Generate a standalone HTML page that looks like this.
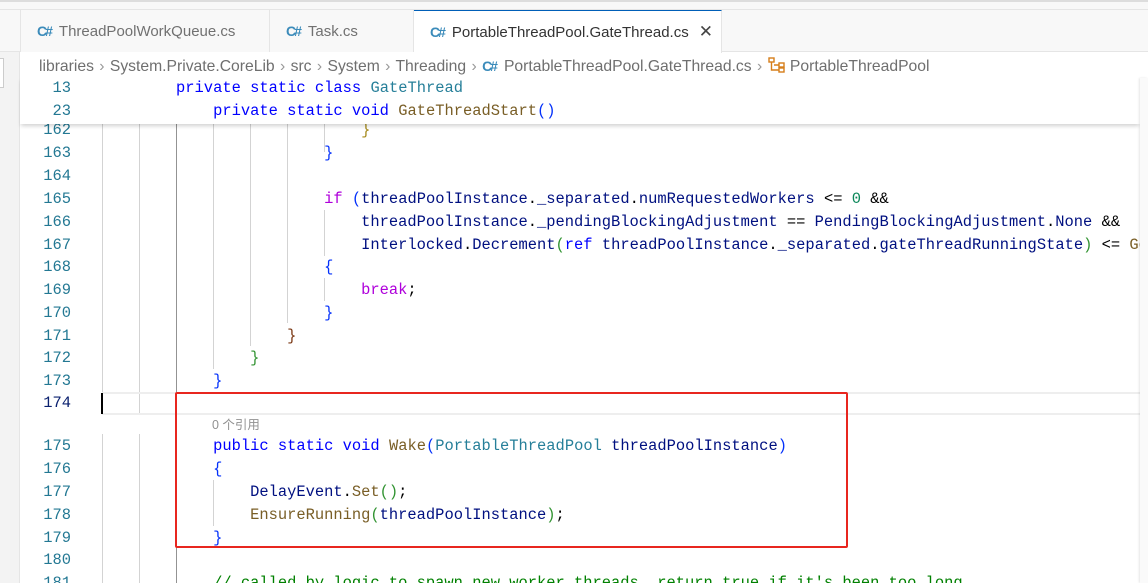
<!DOCTYPE html>
<html><head><meta charset="utf-8"><style>
*{margin:0;padding:0;box-sizing:border-box}
html,body{width:1148px;height:583px;overflow:hidden}
body{background:#fff;position:relative;font-family:"Liberation Sans","Noto Sans CJK SC",sans-serif}
#wrap{position:absolute;left:0;top:0;width:1148px;height:583px;overflow:hidden}
.abs{position:absolute}
.tab{position:absolute;top:10px;height:42px;font-size:15px;color:#717171;line-height:42px;border-right:1px solid #e5e5e5;background:#f8f8f8;white-space:nowrap}
.ci{color:#3b8bba;font-weight:bold;font-size:14px;margin-right:8px;letter-spacing:-2px}
.code{position:absolute;left:102px;font-family:"Liberation Mono",monospace;font-size:15.43px;white-space:pre;height:23px;line-height:23px;color:#000}
.ln{position:absolute;left:20px;width:51px;text-align:right;font-family:"Liberation Mono",monospace;font-size:15.43px;height:23px;line-height:23px;color:#237893}
.g{position:absolute;width:1px;background:#d3d3d3}
.k{color:#0000ff}.t{color:#267f99}.f{color:#795e26}.v{color:#001080}.p{color:#af00db}.n{color:#098658}.c{color:#008000}
.b1{color:#0431fa}.b2{color:#319331}.b3{color:#7b3814}.b4{color:#a58a1c}
.sep{color:#999;margin:0 1px}
</style></head><body><div id="wrap">
<div class="abs" style="left:0;top:0;width:1148px;height:10px;background:#f8f8f8;border-top:2px solid #ddd;border-bottom:1px solid #e5e5e5"></div>
<div class="abs" style="left:0;top:10px;width:1148px;height:42px;background:#f8f8f8;border-bottom:1px solid #e5e5e5"></div>
<div class="abs" style="left:0;top:52px;width:20px;height:531px;background:#f3f3f3;border-right:1px solid #e5e5e5"></div>
<div class="abs" style="left:0;top:58px;width:4px;height:30px;background:#fff;border:1px solid #ccc;border-left:none"></div>
<div class="tab" style="left:20px;width:250px;padding-left:16px;border-left:1px solid #e5e5e5"><span class="ci">C#</span>ThreadPoolWorkQueue.cs</div>
<div class="tab" style="left:270px;width:144px;padding-left:16px"><span class="ci">C#</span>Task.cs</div>
<div class="tab" style="left:414px;width:308px;padding-left:16px;background:#fff;color:#333;border-top:1px solid #005fb8;height:43px"><span class="ci">C#</span>PortableThreadPool.GateThread.cs<span style="margin-left:10px;color:#444;font-size:17px">✕</span></div>
<div class="abs" style="left:39px;top:55px;font-size:15.7px;color:#6f6f6f;line-height:22px;white-space:nowrap">libraries <span class="sep">›</span> System.Private.CoreLib <span class="sep">›</span> src <span class="sep">›</span> System <span class="sep">›</span> Threading <span class="sep">›</span> <span class="ci">C#</span>PortableThreadPool.GateThread.cs <span class="sep">›</span> <svg width="18" height="16" viewBox="0 0 18 16" style="vertical-align:-2px"><g fill="none" stroke="#d67e1a" stroke-width="1.4"><rect x="1" y="1" width="5" height="4"/><rect x="11" y="6" width="5" height="4"/><rect x="11" y="11" width="5" height="4"/><path d="M3.5 5v8h7M6 8h5"/></g></svg> PortableThreadPool</div>

<div class="g" style="left:102px;top:124px;height:268px"></div>
<div class="g" style="left:139px;top:124px;height:291px"></div>
<div class="g" style="left:176px;top:124px;height:459px;background:#939393"></div>
<div class="g" style="left:213px;top:124px;height:245px"></div>
<div class="g" style="left:250px;top:124px;height:222px"></div>
<div class="g" style="left:287px;top:124px;height:199px"></div>
<div class="g" style="left:324px;top:124px;height:28px"></div>
<div class="g" style="left:324px;top:210px;height:46px"></div>
<div class="g" style="left:324px;top:278px;height:23px"></div>
<div class="g" style="left:102px;top:434px;height:149px"></div>
<div class="g" style="left:139px;top:434px;height:149px"></div>
<div class="g" style="left:213px;top:480px;height:46px"></div>
<div class="abs" style="left:102px;top:392px;width:1038px;height:23px;border-top:2px solid #eee;border-bottom:2px solid #eee"></div>
<div class="abs" style="left:101px;top:393px;width:2px;height:21px;background:#000"></div>

<div class="ln" style="top:119px">162</div><div class="code" style="top:119px">                            <span class="b4">}</span></div>
<div class="ln" style="top:142px">163</div><div class="code" style="top:142px">                        <span class="b1">}</span></div>
<div class="ln" style="top:165px">164</div>
<div class="ln" style="top:188px">165</div><div class="code" style="top:188px">                        <span class="p">if</span> <span class="b1">(</span><span class="v">threadPoolInstance</span>.<span class="v">_separated</span>.<span class="v">numRequestedWorkers</span> &lt;= <span class="n">0</span> &amp;&amp;</div>
<div class="ln" style="top:211px">166</div><div class="code" style="top:211px">                            <span class="v">threadPoolInstance</span>.<span class="v">_pendingBlockingAdjustment</span> == <span class="v">PendingBlockingAdjustment</span>.<span class="v">None</span> &amp;&amp;</div>
<div class="ln" style="top:234px">167</div><div class="code" style="top:234px">                            <span class="v">Interlocked</span>.<span class="v">Decrement</span><span class="b2">(</span><span class="k">ref</span> <span class="v">threadPoolInstance</span>.<span class="v">_separated</span>.<span class="v">gateThreadRunningState</span><span class="b2">)</span> &lt;= <span class="f">Ge</span></div>
<div class="ln" style="top:256px">168</div><div class="code" style="top:256px">                        <span class="b1">{</span></div>
<div class="ln" style="top:279px">169</div><div class="code" style="top:279px">                            <span class="p">break</span>;</div>
<div class="ln" style="top:302px">170</div><div class="code" style="top:302px">                        <span class="b1">}</span></div>
<div class="ln" style="top:325px">171</div><div class="code" style="top:325px">                    <span class="b3">}</span></div>
<div class="ln" style="top:347px">172</div><div class="code" style="top:347px">                <span class="b2">}</span></div>
<div class="ln" style="top:370px">173</div><div class="code" style="top:370px">            <span class="b1">}</span></div>
<div class="ln" style="top:392px;color:#0b216f">174</div>
<div class="abs" style="left:212px;top:417px;font-size:12.5px;color:#919191;line-height:16px">0 个引用</div>
<div class="ln" style="top:435px">175</div><div class="code" style="top:435px">            <span class="k">public</span> <span class="k">static</span> <span class="k">void</span> <span class="f">Wake</span><span class="b1">(</span><span class="t">PortableThreadPool</span> <span class="v">threadPoolInstance</span><span class="b1">)</span></div>
<div class="ln" style="top:458px">176</div><div class="code" style="top:458px">            <span class="b1">{</span></div>
<div class="ln" style="top:481px">177</div><div class="code" style="top:481px">                <span class="v">DelayEvent</span>.<span class="f">Set</span><span class="b2">()</span>;</div>
<div class="ln" style="top:504px">178</div><div class="code" style="top:504px">                <span class="f">EnsureRunning</span><span class="b2">(</span><span class="v">threadPoolInstance</span><span class="b2">)</span>;</div>
<div class="ln" style="top:527px">179</div><div class="code" style="top:527px">            <span class="b1">}</span></div>
<div class="ln" style="top:549px">180</div>
<div class="ln" style="top:572px">181</div><div class="code" style="top:572px">            <span class="c">// called by logic to spawn new worker threads, return true if it's been too long</span></div>

<div class="abs" style="left:20px;top:77px;width:1120px;height:47px;background:#fff;box-shadow:0 3px 4px -1px rgba(0,0,0,0.18)">
<div class="ln" style="left:0;top:0">13</div><div class="code" style="left:82px;top:0">        <span class="k">private</span> <span class="k">static</span> <span class="k">class</span> <span class="t">GateThread</span></div>
<div class="ln" style="left:0;top:23px">23</div><div class="code" style="left:82px;top:23px">            <span class="k">private</span> <span class="k">static</span> <span class="k">void</span> <span class="f">GateThreadStart</span><span class="b1">()</span></div>
</div>
<div class="abs" style="left:1140px;top:78px;width:8px;height:505px;background:#fafafa;box-shadow:-1px 0 2px rgba(0,0,0,0.1)"></div>
<div class="abs" style="left:175px;top:392px;width:673px;height:156px;border:2px solid #e8261f;border-radius:2px"></div>
</div></body></html>
